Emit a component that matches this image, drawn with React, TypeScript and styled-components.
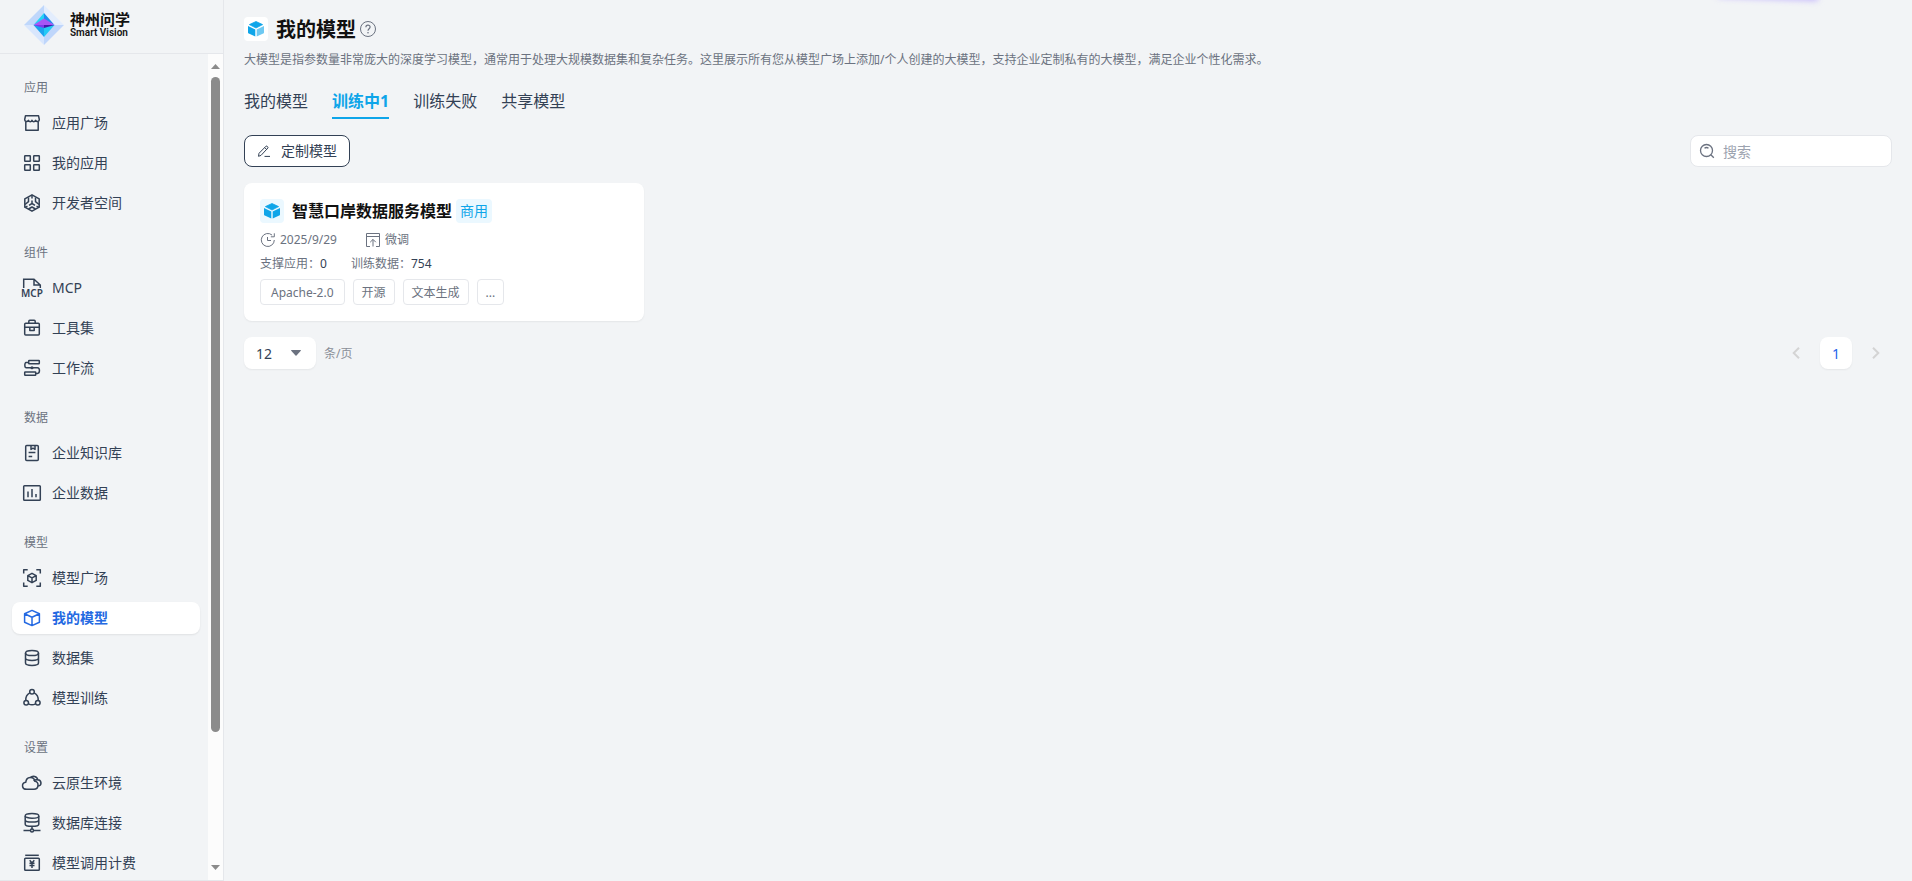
import React from "react";
import styled, { createGlobalStyle, css } from "styled-components";

const GlobalStyle = createGlobalStyle`
  *, *::before, *::after { box-sizing: border-box; }
  body {
    margin: 0;
    background: #f2f4f6;
    color: #334155;
    font-family: "Noto Sans", "Noto Sans CJK SC", sans-serif;
    font-size: 14px;
  }
  button, input, select { font: inherit; color: inherit; }
  h1, h2, p, ul { margin: 0; padding: 0; }
  ul { list-style: none; }
`;

const Shell = styled.div`
  display: flex;
  height: 100vh;
  overflow: hidden;
`;

const Sidebar = styled.aside`
  display: flex;
  flex-direction: column;
  flex: 0 0 224px;
  border-right: 1px solid #e5e7eb;
  border-bottom: 1px solid #e5e7eb;
`;

const Brand = styled.a`
  display: flex;
  align-items: center;
  gap: 6px;
  height: 54px;
  padding: 0 24px 4px;
  border-bottom: 1px solid #e5e7eb;
  color: #111;
  text-decoration: none;
`;

const BrandText = styled.span`
  display: flex;
  flex-direction: column;
`;

const BrandName = styled.span`
  font-size: 15px;
  font-weight: 700;
  line-height: 16px;
`;

const BrandLatin = styled.span`
  font-family: Roboto, sans-serif;
  font-size: 10px;
  font-weight: 600;
  line-height: 11px;
`;

const SidebarBody = styled.div`
  display: flex;
  flex: 1;
  min-height: 0;
`;

const Nav = styled.nav`
  display: flex;
  flex: 1;
  flex-direction: column;
  gap: 24px;
  padding: 24px 8px 0 12px;
  overflow: hidden;
`;

const GroupLabel = styled.h2`
  padding-left: 12px;
  margin-bottom: 10px;
  color: #6b7280;
  font-size: 12px;
  font-weight: 400;
  line-height: 19px;
`;

const NavList = styled.ul`
  display: flex;
  flex-direction: column;
  gap: 8px;
`;

const NavLink = styled.a<{ $active?: boolean }>`
  display: flex;
  align-items: center;
  gap: 10px;
  height: 32px;
  padding-left: 10px;
  border-radius: 8px;
  line-height: 20px;
  text-decoration: none;
  color: #334155;
  ${(p) =>
    p.$active &&
    css`
      background: #fff;
      box-shadow: 0 1px 2px rgba(0, 0, 0, 0.08);
      color: #2469e2;
      font-weight: 700;
    `}
`;

const ScrollRail = styled.div`
  display: flex;
  flex: 0 0 15px;
  flex-direction: column;
  align-items: center;
  background: #fcfcfc;
  padding: 10px 0;
`;

const ScrollTrack = styled.div`
  flex: 1;
  width: 9px;
  padding: 8px 0;
`;

const ScrollThumb = styled.div`
  height: 84%;
  border-radius: 5px;
  background: #8b8b8b;
`;

const Main = styled.main`
  position: relative;
  flex: 1;
  min-width: 0;
  padding: 17px 20px 0;
  overflow: hidden;
`;

const Glow = styled.div`
  position: absolute;
  top: -9px;
  right: 94px;
  width: 100px;
  height: 8px;
  background: #c3b5fd;
  filter: blur(3px);
  transform: rotate(2deg);
`;

const TitleRow = styled.div`
  display: flex;
  align-items: center;
  height: 24px;
`;

const IconTile = styled.span<{ $tint: string }>`
  display: flex;
  align-items: center;
  justify-content: center;
  width: 24px;
  height: 24px;
  margin-right: 8px;
  border-radius: 4px;
  background: ${(p) => p.$tint};
`;

const PageTitle = styled.h1`
  padding-top: 2px;
  color: #111;
  font-size: 20px;
  font-weight: 700;
  line-height: 24px;
`;

const HelpButton = styled.button`
  display: flex;
  margin-left: 4px;
  padding: 0;
  border: 0;
  background: none;
  color: #6b7280;
`;

const Description = styled.p`
  margin-top: 10px;
  color: #6b7280;
  font-size: 12px;
  line-height: 18px;
`;

const Tabs = styled.div`
  display: flex;
  gap: 24px;
  margin-top: 20px;
`;

const Tab = styled.button<{ $active?: boolean }>`
  height: 30px;
  padding: 0 0 4px;
  border: 0;
  border-bottom: 2px solid ${(p) => (p.$active ? "#0ea5e9" : "transparent")};
  background: none;
  color: ${(p) => (p.$active ? "#0ea5e9" : "#334155")};
  font-size: 16px;
  font-weight: ${(p) => (p.$active ? 700 : 400)};
  line-height: 24px;
`;

const Toolbar = styled.div`
  display: flex;
  justify-content: space-between;
  margin-top: 16px;
`;

const OutlineButton = styled.button`
  display: flex;
  align-items: center;
  gap: 10px;
  height: 32px;
  padding: 0 12px;
  border: 1px solid #334155;
  border-radius: 8px;
  background: #fff;
  line-height: 20px;
`;

const SearchBox = styled.label`
  display: flex;
  align-items: center;
  gap: 8px;
  width: 202px;
  height: 32px;
  padding: 0 8px;
  border: 1px solid #e5e7eb;
  border-radius: 8px;
  background: #fff;
  color: #6b7280;
`;

const SearchInput = styled.input`
  flex: 1;
  min-width: 0;
  padding: 0;
  border: 0;
  outline: 0;
  background: none;
  &::placeholder { color: #9ca3af; }
`;

const CardGrid = styled.div`
  display: grid;
  grid-template-columns: repeat(4, 1fr);
  gap: 16px;
  margin-top: 16px;
`;

const Card = styled.article`
  padding: 16px;
  border-radius: 8px;
  background: #fff;
  box-shadow: 0 1px 2px rgba(0, 0, 0, 0.06);
`;

const CardTitle = styled.h2`
  color: #111;
  font-size: 16px;
  font-weight: 700;
  line-height: 24px;
`;

const LicenseBadge = styled.span`
  margin-left: 4px;
  padding: 0 4px;
  border-radius: 4px;
  background: #ebf8ff;
  color: #0ea5e9;
  line-height: 24px;
`;

const MetaRow = styled.div<{ $top: number; $gap: number }>`
  display: flex;
  gap: ${(p) => p.$gap}px;
  margin-top: ${(p) => p.$top}px;
  color: #6b7280;
  font-size: 12px;
  line-height: 18px;
`;

const Meta = styled.span`
  display: flex;
  align-items: center;
  gap: 4px;
`;

const Stat = styled.span`
  b { color: #334155; font-weight: 400; }
`;

const TagRow = styled.div`
  display: flex;
  gap: 8px;
  margin-top: 6px;
`;

const Tag = styled.span<{ $license?: boolean }>`
  height: 26px;
  padding: 0 ${(p) => (p.$license ? 10 : 8)}px;
  border: 1px solid #e5e7eb;
  border-radius: 4px;
  color: #6b7280;
  font-size: 12px;
  line-height: 26px;
`;

const Footer = styled.div`
  display: flex;
  align-items: center;
  justify-content: space-between;
  margin-top: 16px;
`;

const PageSize = styled.label`
  display: flex;
  align-items: center;
  gap: 8px;
  color: #8a8f98;
  font-size: 12px;
`;

const SelectWrap = styled.span`
  position: relative;
  display: flex;
  svg {
    position: absolute;
    right: 15px;
    top: 13px;
    pointer-events: none;
  }
`;

const Select = styled.select`
  width: 72px;
  height: 32px;
  padding: 0 12px;
  border: 0;
  border-radius: 8px;
  appearance: none;
  background: #fff;
  box-shadow: 0 1px 2px rgba(0, 0, 0, 0.06);
  color: #334155;
  font-size: 14px;
`;

const Pager = styled.div`
  display: flex;
  gap: 8px;
`;

const PageButton = styled.button<{ $current?: boolean }>`
  display: flex;
  align-items: center;
  justify-content: center;
  width: 32px;
  height: 32px;
  padding: 0;
  border: 0;
  border-radius: 8px;
  background: ${(p) => (p.$current ? "#fff" : "none")};
  box-shadow: ${(p) => (p.$current ? "0 1px 2px rgba(0, 0, 0, 0.06)" : "none")};
  color: ${(p) => (p.$current ? "#2563eb" : "#d4d4d4")};
`;

const icons: Record<string, React.ReactNode> = {
  store: (
    <>
      <path d="M3.500 2.700h13l.8 3.800c.2 2.300-2.800 2.600-3.700.8-1 1.900-2.800 1.900-3.600 0-.8 1.900-2.600 1.900-3.600 0-.9 1.800-3.900 1.500-3.700-.8z" />
      <path d="M3.800 8.800v8.400h12.400V8.800" />
    </>
  ),
  grid: (
    <>
      <rect x="2.700" y="2.700" width="5.600" height="5.600" rx=".5" />
      <rect x="11.700" y="2.700" width="5.600" height="5.600" rx=".5" />
      <rect x="2.700" y="11.700" width="5.600" height="5.600" rx=".5" />
      <rect x="11.700" y="11.700" width="5.600" height="5.600" rx=".5" />
    </>
  ),
  space: (
    <>
      <path d="M10 1.800l7.200 4v8.400L10 18.200l-7.200-4V5.800z" />
      <path d="M10 2v3.500M10 7.500v3M10 10.500l-3 1.800M5.500 13.200l-2.700 1.200M10 10.500l3 1.800M14.500 13.200l2.700 1.200M6.500 4.500v4.200l-3.500 2.800M13.500 4.500v4.200l3.500 2.800M6.500 16l3.500-2 3.500 2" />
    </>
  ),
  tools: (
    <>
      <rect x="2.700" y="5.300" width="14.600" height="11.800" rx="1" />
      <path d="M6.800 5V3.400c0-.7.4-1.100 1-1.100h4.400c.6 0 1 .4 1 1.100V5M2.700 9.300h14.600M7.800 9.500v3h4.400v-3" />
    </>
  ),
  flow: (
    <>
      <rect x="6.700" y="2.600" width="10.600" height="3.200" rx=".5" />
      <rect x="2.700" y="13.900" width="11" height="3.400" rx=".5" />
      <path d="M6.500 4.600H4c-1.600 0-1.600 5.200.3 5.200h11.200c2.600 0 2.600 5.600 0 5.600H14" />
      <circle cx="10" cy="9.800" r=".8" fill="currentColor" />
    </>
  ),
  book: (
    <>
      <rect x="3.700" y="2.500" width="12.600" height="15" rx="1" />
      <path d="M9 2.800v3.600l2-1.200 2 1.200V2.800M6.600 9.500h6.800M6.600 13.500h3.600" />
    </>
  ),
  chart: (
    <>
      <rect x="1.700" y="2.700" width="16.600" height="14.600" rx=".8" />
      <path d="M6 8.500v5.800M10 6v8.300M14 11v3.300" />
    </>
  ),
  plaza: (
    <>
      <path d="M1.700 5.500V1.800h4M14.300 1.800h4v3.700M1.700 14.500v3.700h4M14.300 18.200h4v-3.700" />
      <path d="M10 5.300l4.200 2.300v4.800L10 14.700l-4.200-2.300V7.600zM5.800 7.600L10 9.900l4.200-2.300M10 9.900v4.800" />
    </>
  ),
  cube: (
    <path d="M10 2.400l7.400 3.400v8.400L10 17.600l-7.400-3.400V5.800zM2.600 5.800L10 9.300l7.400-3.500M10 9.300v8.300" />
  ),
  data: (
    <>
      <ellipse cx="10" cy="5" rx="6.500" ry="2.600" />
      <path d="M3.500 5v10c0 3.200 13 3.200 13 0V5M3.500 10c0 3.200 13 3.200 13 0" />
    </>
  ),
  train: (
    <>
      <circle cx="10" cy="3.800" r="2.300" />
      <circle cx="4.200" cy="14.800" r="2.300" />
      <circle cx="15.800" cy="14.800" r="2.300" />
      <path d="M7.800 4.800C5 6.200 3.600 9 3.800 12.400M12.200 4.800c2.800 1.400 4.200 4.200 4 7.600M6.500 15.800c2.200 1.200 4.800 1.200 7 0" />
    </>
  ),
  cloud: (
    <>
      <path d="M4.800 16.300c-5.400 0-5.600-6.200-1-7C4.200 3.200 12 3 12.800 8.200c4.800.3 4 8-.8 8.100z" />
      <path d="M8.300 4.800c2.200-2.800 7-1.600 7.400 2 4 .2 4.600 5.800.4 6.200M11.800 8.200c.6-1.200 2-1.800 3.600-1.200" />
    </>
  ),
  server: (
    <>
      <ellipse cx="10" cy="2.900" rx="6.800" ry="2.300" />
      <path d="M3.200 2.900v8.300c0 2.800 13.600 2.800 13.600 0V2.900M3.200 7c0 2.800 13.600 2.800 13.600 0M10 13.400v2.600M1.500 17.500h6.800M11.700 17.500h6.800" />
      <circle cx="10" cy="17.500" r="1.500" />
    </>
  ),
  billing: (
    <>
      <path d="M3.200 2.300h13.600" />
      <rect x="2.700" y="5.300" width="14.600" height="11.900" rx=".8" />
      <path d="M7.700 7.200L10 9.900l2.300-2.700M7.500 10.200h5M7.500 12.500h5M10 9.900v5" />
    </>
  ),
};

const IconSlot = styled.span`
  display: flex;
  flex-shrink: 0;
  align-items: center;
  justify-content: center;
  width: 20px;
  height: 20px;
  svg { flex-shrink: 0; }
`;

const McpIcon = () => (
  <svg width="24" height="22" viewBox="0 0 24 22" overflow="visible" aria-hidden="true">
    <path
      d="M3.700 11V2.200h10.300l6.300 5.800v3M14 2.200V8h6"
      fill="none"
      stroke="currentColor"
      strokeWidth="1.500"
    />
    <text x="12" y="20" textAnchor="middle" fontSize="10" fontWeight="600" fill="currentColor">
      MCP
    </text>
  </svg>
);

const NavIcon = ({ name }: { name: string }) => (
  <IconSlot>
    {name === "mcp" ? (
      <McpIcon />
    ) : (
      <svg
        width="20"
        height="20"
        viewBox="0 0 20 20"
        fill="none"
        stroke="currentColor"
        strokeWidth="1.500"
        strokeLinejoin="round"
        overflow="visible"
        aria-hidden="true"
      >
        {icons[name]}
      </svg>
    )}
  </IconSlot>
);

const Logo = () => (
  <svg width="40" height="40" viewBox="0 0 40 40" aria-hidden="true">
    <path d="M20 0L0 20h20z" fill="#bfd7fb" />
    <path d="M20 0l20 20H20z" fill="#e3edfd" />
    <path d="M0 20l20 20V20z" fill="#d8e6fd" />
    <path d="M40 20L20 40V20z" fill="#bfd6fb" />
    <path d="M20 8L9.500 20 20 15z" fill="#22d3f5" />
    <path d="M20 8l10.500 12L20 15z" fill="#1e8df0" />
    <path d="M9.500 20L20 32V20z" fill="#1ba3ee" />
    <path d="M30.500 20L20 32V20z" fill="#22c9f5" />
    <path d="M9.500 20L20 13.500 30.500 20z" fill="#a656f5" />
    <path d="M9.500 20L20 23V20z" fill="#7c3aed" />
    <path d="M30.500 20L20 23V20z" fill="#4318a8" />
  </svg>
);

const ModelCube = ({ faded }: { faded?: boolean }) => (
  <svg width="18" height="18" viewBox="0 0 18 18" fill="#0ea5e9" aria-hidden="true">
    <path d="M9 1.500l6.600 3.100L9 8 2.400 4.600z" stroke="#0ea5e9" strokeWidth=".8" strokeLinejoin="round" />
    <path d="M1 6l7.300 3.500v7L1.800 13.600c-.5-.2-.8-.6-.8-1.100z" />
    <path d="M17 6L9.700 9.500v7l6.500-2.900c.5-.2.8-.6.8-1.100z" opacity={faded ? 0.6 : 1} />
  </svg>
);

const navGroups = [
  { label: "应用", items: [["store", "应用广场"], ["grid", "我的应用"], ["space", "开发者空间"]] },
  { label: "组件", items: [["mcp", "MCP"], ["tools", "工具集"], ["flow", "工作流"]] },
  { label: "数据", items: [["book", "企业知识库"], ["chart", "企业数据"]] },
  {
    label: "模型",
    items: [["plaza", "模型广场"], ["cube", "我的模型"], ["data", "数据集"], ["train", "模型训练"]],
  },
  { label: "设置", items: [["cloud", "云原生环境"], ["server", "数据库连接"], ["billing", "模型调用计费"]] },
];

const tabs = ["我的模型", "训练中1", "训练失败", "共享模型"];
const license = "Apache-2.0";
const tags = ["开源", "文本生成", "..."];

export default function App() {
  return (
    <>
      <GlobalStyle />
      <Shell>
        <Sidebar>
          <Brand href="#">
            <Logo />
            <BrandText>
              <BrandName>神州问学</BrandName>
              <BrandLatin>Smart Vision</BrandLatin>
            </BrandText>
          </Brand>
          <SidebarBody>
            <Nav>
              {navGroups.map((group) => (
                <section key={group.label}>
                  <GroupLabel>{group.label}</GroupLabel>
                  <NavList>
                    {group.items.map(([icon, text]) => (
                      <li key={text}>
                        <NavLink href="#" $active={icon === "cube"}>
                          <NavIcon name={icon} />
                          {text}
                        </NavLink>
                      </li>
                    ))}
                  </NavList>
                </section>
              ))}
            </Nav>
            <ScrollRail aria-hidden="true">
              <svg width="9" height="5" viewBox="0 0 9 5" fill="#8b8b8b">
                <path d="M4.500 0L9 5H0z" />
              </svg>
              <ScrollTrack>
                <ScrollThumb />
              </ScrollTrack>
              <svg width="9" height="5" viewBox="0 0 9 5" fill="#8b8b8b">
                <path d="M0 0h9L4.500 5z" />
              </svg>
            </ScrollRail>
          </SidebarBody>
        </Sidebar>

        <Main>
          <Glow />
          <TitleRow>
            <IconTile $tint="#fff">
              <ModelCube faded />
            </IconTile>
            <PageTitle>我的模型</PageTitle>
            <HelpButton aria-label="帮助">
              <svg width="16" height="16" viewBox="0 0 16 16" fill="none" stroke="currentColor">
                <circle cx="8" cy="8" r="7.500" />
                <path d="M5.900 6.200c0-2.700 4.200-2.700 4.200-.1 0 1.600-2.100 1.700-2.100 3.600" strokeWidth="1.200" />
                <circle cx="8" cy="11.800" r=".8" fill="currentColor" stroke="none" />
              </svg>
            </HelpButton>
          </TitleRow>
          <Description>
            大模型是指参数量非常庞大的深度学习模型，通常用于处理大规模数据集和复杂任务。这里展示所有您从模型广场上添加/个人创建的大模型，支持企业定制私有的大模型，满足企业个性化需求。
          </Description>
          <Tabs role="tablist">
            {tabs.map((tab, i) => (
              <Tab key={tab} role="tab" aria-selected={i === 1} $active={i === 1}>
                {tab}
              </Tab>
            ))}
          </Tabs>
          <Toolbar>
            <OutlineButton>
              <svg width="14" height="14" viewBox="0 0 14 14" fill="none" stroke="currentColor" aria-hidden="true">
                <path d="M1.500 12.300l.5-3L9 2.200c.7-.7 2.600 1 1.900 1.800L4 11.400zM7.500 12.400h5.500M7.700 3.600l2 2" />
              </svg>
              定制模型
            </OutlineButton>
            <SearchBox>
              <svg width="16" height="16" viewBox="0 0 16 16" fill="none" stroke="currentColor" strokeWidth="1.300" aria-hidden="true">
                <circle cx="7.500" cy="7.500" r="6" />
                <path d="M11.800 11.800l3 3M5.500 5.300c1.200-1 2.800-1 4 0" />
              </svg>
              <SearchInput type="text" aria-label="搜索" placeholder="搜索" />
            </SearchBox>
          </Toolbar>

          <CardGrid>
            <Card>
              <TitleRow>
                <IconTile $tint="#ebf8ff">
                  <ModelCube />
                </IconTile>
                <CardTitle>智慧口岸数据服务模型</CardTitle>
                <LicenseBadge>商用</LicenseBadge>
              </TitleRow>
              <MetaRow $top={8} $gap={28}>
                <Meta>
                  <svg width="16" height="16" viewBox="0 0 16 16" fill="none" stroke="currentColor" aria-hidden="true">
                    <path d="M14.300 8a6.500 6.500 0 1 1-2.200-4.900M14.300 1.300v3.500h-3.500M7.500 5v3.500H11" />
                  </svg>
                  2025/9/29
                </Meta>
                <Meta>
                  <svg width="16" height="16" viewBox="0 0 16 16" fill="none" stroke="currentColor" aria-hidden="true">
                    <path d="M5 14.500H1.500v-13h13v13H11M1.500 4.500h13M8 14.500V7.500M5.200 10.200L8 7.400l2.800 2.800" />
                  </svg>
                  微调
                </Meta>
              </MetaRow>
              <MetaRow $top={6} $gap={24}>
                <Stat>
                  支撑应用：<b>0</b>
                </Stat>
                <Stat>
                  训练数据：<b>754</b>
                </Stat>
              </MetaRow>
              <TagRow>
                <Tag $license>{license}</Tag>
                {tags.map((tag) => (
                  <Tag key={tag}>{tag}</Tag>
                ))}
              </TagRow>
            </Card>
          </CardGrid>

          <Footer>
            <PageSize>
              <SelectWrap>
                <Select defaultValue="12">
                  <option>12</option>
                  <option>24</option>
                </Select>
                <svg width="10" height="6" viewBox="0 0 10 6" fill="#6b7280" aria-hidden="true">
                  <path d="M.5 0h9c.4 0 .5.400.300.700L5.500 5.500c-.3.300-.7.300-1 0L.2.700C0 .400.100 0 .5 0z" />
                </svg>
              </SelectWrap>
              条/页
            </PageSize>
            <Pager>
              <PageButton aria-label="上一页" disabled>
                <svg width="8" height="12" viewBox="0 0 8 12" fill="none" stroke="currentColor" strokeWidth="2">
                  <path d="M7 .7L1.700 6 7 11.300" />
                </svg>
              </PageButton>
              <PageButton $current>1</PageButton>
              <PageButton aria-label="下一页" disabled>
                <svg width="8" height="12" viewBox="0 0 8 12" fill="none" stroke="currentColor" strokeWidth="2">
                  <path d="M1 .7L6.300 6 1 11.300" />
                </svg>
              </PageButton>
            </Pager>
          </Footer>
        </Main>
      </Shell>
    </>
  );
}
